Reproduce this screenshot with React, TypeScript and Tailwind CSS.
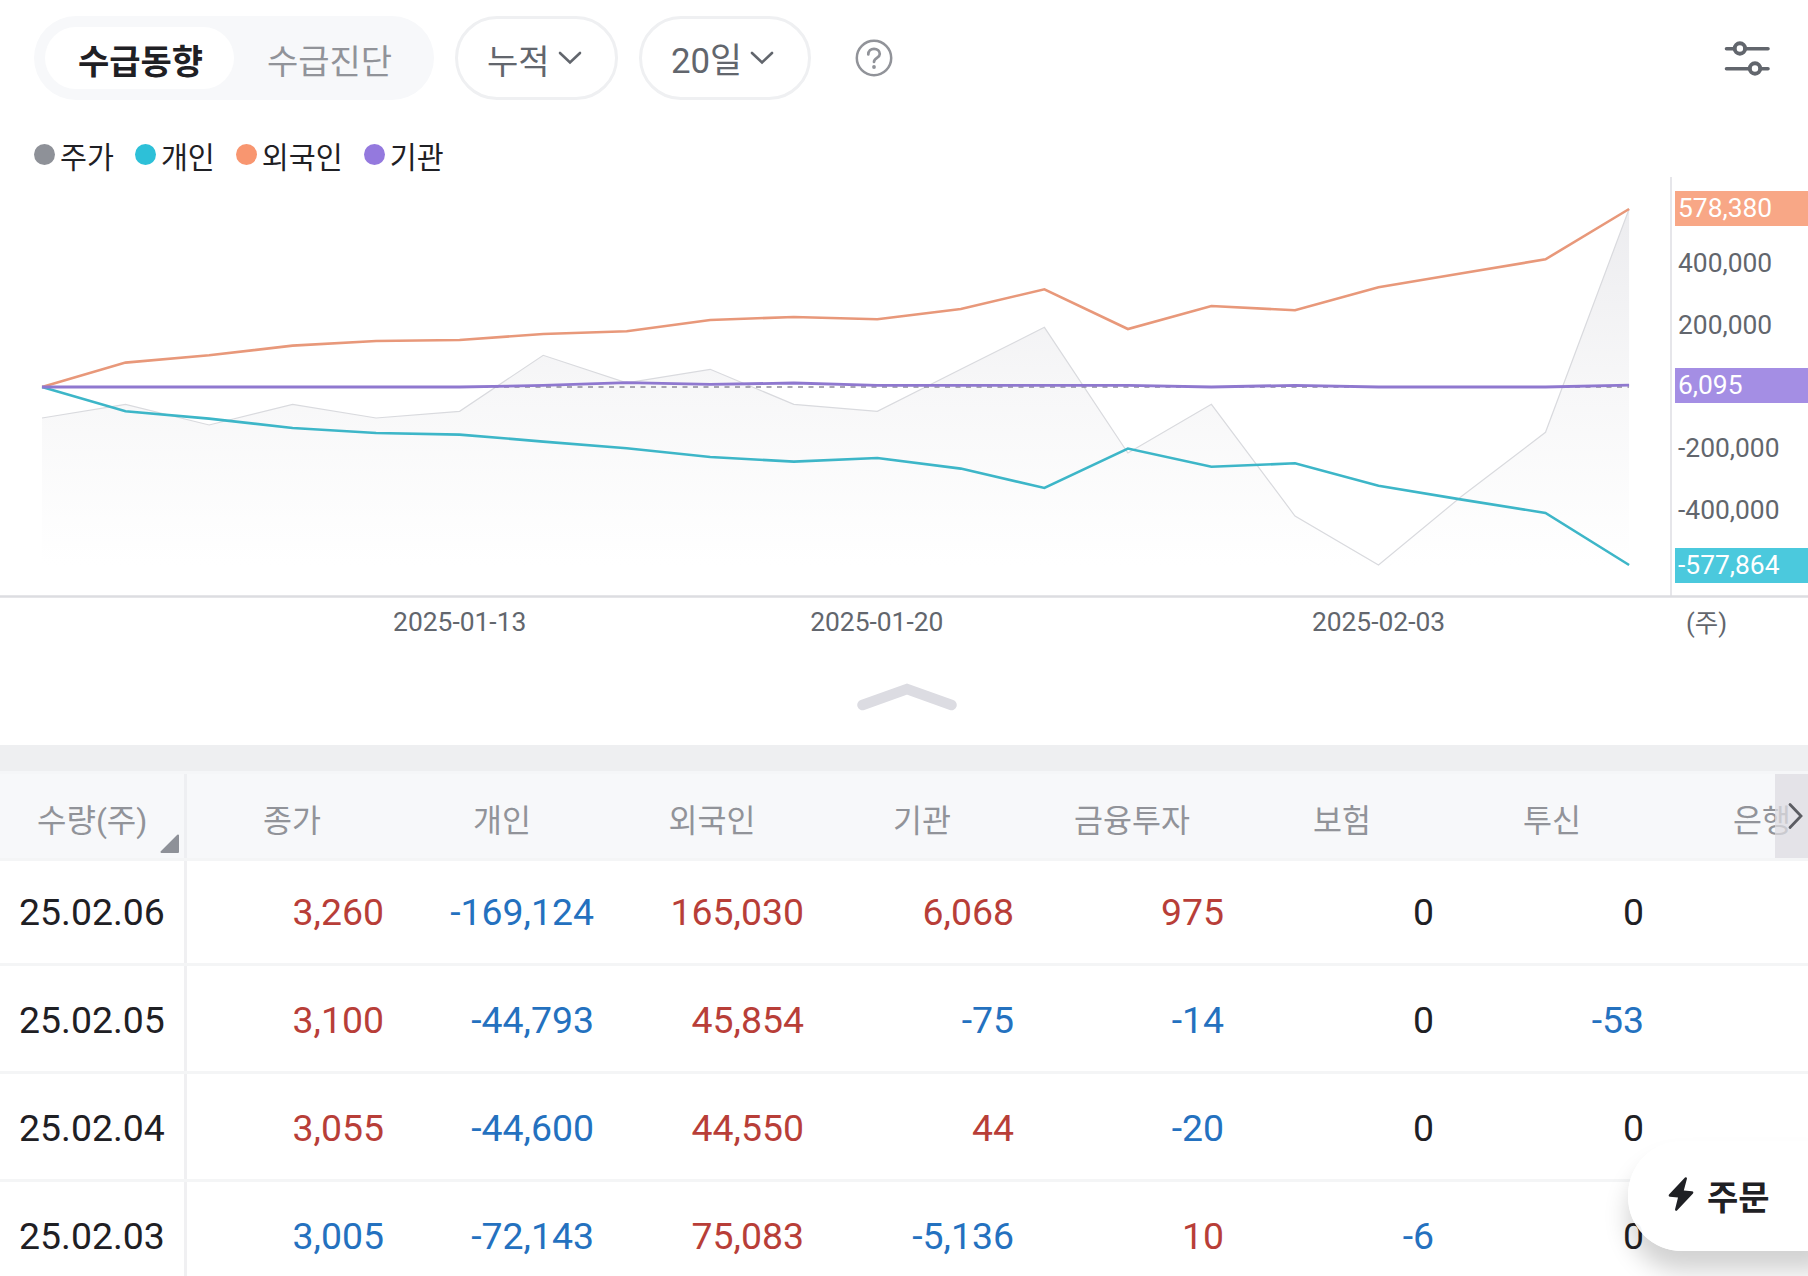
import { clsx } from 'clsx';

const legend = [
  { label: '주가', dot: 'bg-[#8e9198]' },
  { label: '개인', dot: 'bg-[#2dc0d8]' },
  { label: '외국인', dot: 'bg-[#f89670]' },
  { label: '기관', dot: 'bg-[#9479de]' },
];

// y positions of each series, one entry per trading day
const price = [418, 404.3, 425, 404.3, 418, 411.3, 355.3, 382.8, 369.3, 404.3, 411.3, 369.3, 327.3, 453, 404.3, 516, 565, 496, 432.3, 209];
const foreign = [387, 362.6, 355.3, 345.6, 341, 340, 334, 331.3, 320, 317, 319.3, 309, 289.3, 329, 306, 310.3, 287.3, 273.3, 259.3, 209];
const personal = [387, 411.3, 418.6, 428, 433, 434.6, 441.6, 448.3, 457, 461.6, 458, 468.6, 488, 448.6, 466.8, 463.3, 485.8, 499.6, 513, 565];
const institution = [387, 387, 387, 387, 387, 387, 385.4, 382.7, 384.4, 383, 385.3, 385.3, 385.3, 385.3, 387, 385.3, 387, 387, 387, 385.1];

const CHART_TOP = 177;
const STEP = 83.53;

const toPoints = (ys: number[]) => ys.map((y, i) => `${(42 + i * STEP).toFixed(1)},${(y - CHART_TOP).toFixed(1)}`).join(' ');

const axis = [
  { text: '578,380', y: 208.5, box: 'bg-[#f8a786] text-white' },
  { text: '400,000', y: 263.5, box: 'text-[#62666d]' },
  { text: '200,000', y: 325.5, box: 'text-[#62666d]' },
  { text: '6,095', y: 385, box: 'bg-[#a48ee4] text-white' },
  { text: '-200,000', y: 448.5, box: 'text-[#62666d]' },
  { text: '-400,000', y: 510.5, box: 'text-[#62666d]' },
  { text: '-577,864', y: 565, box: 'bg-[#4bc9dd] text-white' },
];

const dates = [
  { text: '2025-01-13', x: 459.7 },
  { text: '2025-01-20', x: 876.8 },
  { text: '2025-02-03', x: 1378.5 },
];

const columns = ['종가', '개인', '외국인', '기관', '금융투자', '보험', '투신', '은행'];

const rows = [
  { date: '25.02.06', up: true, cells: ['3,260', '-169,124', '165,030', '6,068', '975', '0', '0', ''] },
  { date: '25.02.05', up: true, cells: ['3,100', '-44,793', '45,854', '-75', '-14', '0', '-53', ''] },
  { date: '25.02.04', up: true, cells: ['3,055', '-44,600', '44,550', '44', '-20', '0', '0', ''] },
  { date: '25.02.03', up: false, cells: ['3,005', '-72,143', '75,083', '-5,136', '10', '-6', '0', ''] },
];

const cellColor = (value: string, index: number, up: boolean) => {
  if (value === '0') return 'text-[#1f2024]';
  if (value.startsWith('-') || (index === 0 && !up)) return 'text-[#2471bf]';
  return 'text-[#b83e38]';
};

function ChevronDown() {
  return (
    <svg width="24" height="14" viewBox="0 0 24 14" fill="none" className="shrink-0">
      <path d="M2 2 L12 11.5 L22 2" stroke="#62666d" strokeWidth="2.6" strokeLinecap="round" />
    </svg>
  );
}

function Toolbar() {
  return (
    <div className="flex h-[100px] items-start pt-4 pl-[34px] text-[34px] leading-none text-[#62666d]">
      <div className="flex h-[84px] w-[400px] items-center rounded-full bg-[#f7f8fa] pl-[11px]">
        <div className="flex h-[62px] w-[189px] items-center justify-center rounded-full bg-white font-bold text-[#1f2024]">
          <span className="pt-2 pl-0.5">수급동향</span>
        </div>
        <span className="pt-2 pl-[33px] text-[#919399]">수급진단</span>
      </div>
      <button className="ml-[21px] flex h-[84px] w-[163px] items-center gap-2 rounded-full border-[3px] border-[#eff0f2] pl-[29px]">
        <span className="pt-[7px]">누적</span>
        <ChevronDown />
      </button>
      <button className="ml-[21px] flex h-[84px] w-[172px] items-center gap-2 rounded-full border-[3px] border-[#eff0f2] pl-[29px]">
        <span className="pt-[7px] text-[34.8px]">20일</span>
        <ChevronDown />
      </button>
      <svg width="38" height="38" viewBox="0 0 38 38" fill="none" className="mt-[23px] ml-11">
        <circle cx="19" cy="19" r="17.2" stroke="#919399" strokeWidth="2.5" />
        <path d="M13.3 15.4 C13.3 11.8 15.8 9.8 19 9.8 C22.3 9.8 24.8 12 24.8 15 C24.8 19 19 18.8 19 23" stroke="#919399" strokeWidth="2.7" strokeLinecap="round" />
        <circle cx="19" cy="28" r="1.9" fill="#919399" />
      </svg>
      <svg width="46" height="36" viewBox="0 0 46 36" fill="none" stroke="#62666d" strokeWidth="3.6" strokeLinecap="round" className="mt-6 mr-[38px] ml-auto">
        <path d="M2.5 8.8 H10 M21 8.8 H44 M2.5 28.8 H25 M37 28.8 H44" />
        <circle cx="15.9" cy="8.5" r="5.2" strokeWidth="4" />
        <circle cx="31" cy="28.5" r="5.2" strokeWidth="4" />
      </svg>
    </div>
  );
}

function Chart() {
  return (
    <div className="relative h-[568px]">
      <svg width="1808" height="424" viewBox="0 0 1808 424" fill="none" className="block">
        <defs>
          <linearGradient id="area" x1="0" y1="31" x2="0" y2="388" gradientUnits="userSpaceOnUse">
            <stop offset="0" stopColor="#ececef" />
            <stop offset="0.5" stopColor="#f7f7f8" />
            <stop offset="1" stopColor="#ffffff" />
          </linearGradient>
        </defs>
        <polygon points={`42,388 ${toPoints(price)} 1629,388`} fill="url(#area)" />
        <polyline points={toPoints(price)} stroke="#d9dade" strokeWidth="1.2" />
        <line x1="42" y1="210" x2="1629" y2="210" stroke="#8e8b99" strokeWidth="1.3" strokeDasharray="5 5.5" />
        <polyline points={toPoints(foreign)} stroke="#e8987a" strokeWidth="2.6" />
        <polyline points={toPoints(personal)} stroke="#3db6c8" strokeWidth="2.6" />
        <polyline points={toPoints(institution)} stroke="#8f78cf" strokeWidth="2.8" />
        <line x1="1671" y1="0" x2="1671" y2="419" stroke="#e6e6ea" strokeWidth="2" />
        <line x1="0" y1="419.5" x2="1808" y2="419.5" stroke="#dcdde1" strokeWidth="2.6" />
      </svg>
      {axis.map((tick) => (
        <div
          key={tick.text}
          className={clsx('absolute left-[1675px] flex h-[35px] w-[133px] items-center pl-[3px] text-[26.4px] leading-none', tick.box)}
          style={{ top: tick.y - CHART_TOP - 17.5 }}
        >
          {tick.text}
        </div>
      ))}
      {dates.map((d) => (
        <span
          key={d.text}
          className="absolute top-[431px] -translate-x-1/2 text-[26.4px] leading-[28px] text-[#62666d]"
          style={{ left: d.x }}
        >
          {d.text}
        </span>
      ))}
      <span className="absolute top-[432px] left-[1686px] text-[25.5px] leading-[28px] text-[#62666d]">(주)</span>
      <svg width="100" height="28" viewBox="0 0 100 28" fill="none" className="absolute top-[506px] left-[856.5px]">
        <path d="M5.5 22 L50 6 L94.5 22" stroke="#dcdce2" strokeWidth="10.5" strokeLinecap="round" />
      </svg>
    </div>
  );
}

function InvestorTable() {
  return (
    <div className="relative">
      <div className="flex h-[90px] border-y-[3px] border-[#f5f6f8] bg-[#f7f8fa] text-[31.5px] leading-none text-[#919399]">
        <div className="relative flex w-[187px] shrink-0 items-center border-r-[3px] border-[#eeeff2] pl-[37px]">
          <span className="pt-[10px] text-[32px]">수량(주)</span>
          <svg width="20" height="20" viewBox="0 0 20 20" className="absolute right-1 bottom-[4px]">
            <path d="M18 1.5 V18 H1.5 Z" fill="#8e9198" stroke="#8e9198" strokeWidth="2" strokeLinejoin="round" />
          </svg>
        </div>
        {columns.map((name) => (
          <div key={name} className="flex w-[210px] shrink-0 items-center justify-center pt-[11px]">
            {name}
          </div>
        ))}
      </div>
      <div className="absolute top-[3px] left-[1775px] flex h-[84px] w-[33px] items-center bg-[#dddce2]/75 pl-[13px]">
        <svg width="16" height="28" viewBox="0 0 16 28" fill="none">
          <path d="M2 2.5 L13 14 L2 25.5" stroke="#5c5d63" strokeWidth="2.8" strokeLinecap="round" />
        </svg>
      </div>
      <div className="-mt-[3px]">
        {rows.map((row, i) => (
          <div
            key={row.date}
            className={clsx('flex h-[108px] border-b-[3px] border-[#f4f5f6] text-[37.4px] leading-none', i === 0 && 'border-t-[3px]')}
          >
            <div className={clsx('flex w-[187px] shrink-0 items-center border-r-[3px] border-[#f0f0f2] pl-[19px] text-[#1f2024]', i > 0 ? 'pt-[5px]' : 'pt-0.5')}>
              {row.date}
            </div>
            {row.cells.map((value, c) => (
              <div
                key={c}
                className={clsx('flex w-[210px] shrink-0 items-center justify-end pr-[13px]', i > 0 ? 'pt-[5px]' : 'pt-0.5', cellColor(value, c, row.up))}
              >
                {value}
              </div>
            ))}
          </div>
        ))}
      </div>
    </div>
  );
}

export default function App() {
  return (
    <div className="relative h-[1276px] w-[1808px] overflow-hidden bg-white font-[Roboto,'Noto_Sans_CJK_KR',sans-serif]">
      <Toolbar />
      <div className="flex h-[77px] items-start pt-[44px] pl-[34px] text-[29.3px] leading-none text-[#1f2024]">
        {legend.map((item) => (
          <div key={item.label} className="mr-[21px] flex items-start gap-[5px]">
            <span className={clsx('size-[21px] rounded-full', item.dot)} />
            <span>{item.label}</span>
          </div>
        ))}
      </div>
      <Chart />
      <div className="h-[26px] bg-[#eeeff1]" />
      <InvestorTable />

      {/* floating order button */}
      <button className="absolute top-[1141px] left-[1628px] flex h-[110px] w-[200px] items-center rounded-l-[54px] bg-white/95 pl-[39px] text-[34px] leading-none font-bold text-[#1f2024] shadow-[0_20px_24px_rgba(0,0,0,0.18)]">
        <svg width="28" height="36" viewBox="0 0 28 36" className="-mt-[5px]">
          <path d="M18 1.5 L2 18.6 Q1 20.5 3 20.8 L11 21.6 L8 33.5 Q8.3 35.5 10 34.6 L26 17.6 Q27 15.7 25 15.3 L16.8 14.5 L20 2.4 Q19.6 0.6 18 1.5 Z" fill="#1f2024" />
        </svg>
        <span className="pt-[3px] pl-3">주문</span>
      </button>
    </div>
  );
}
